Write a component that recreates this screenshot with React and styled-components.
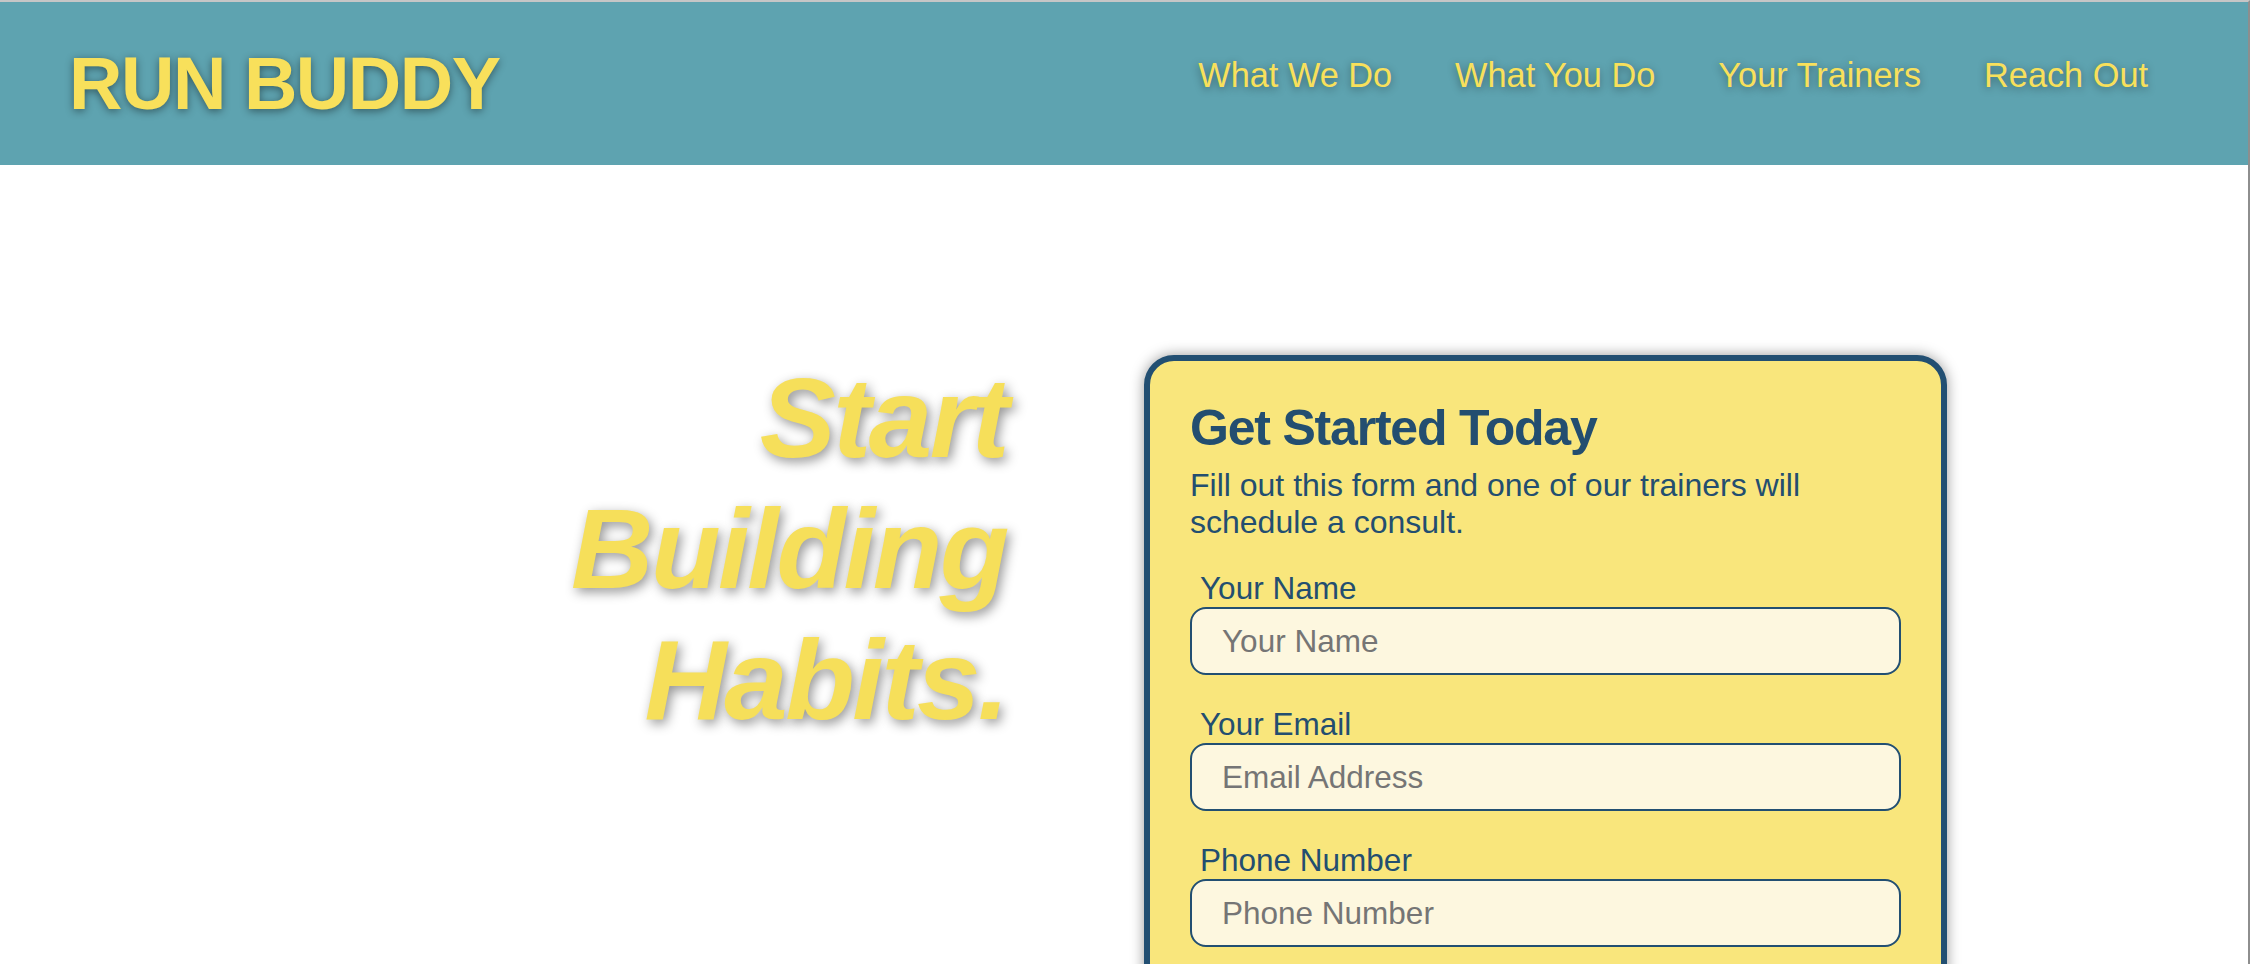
import React from "react";
import styled, { createGlobalStyle } from "styled-components";

const GlobalStyle = createGlobalStyle`
  html, body {
    margin: 0;
    padding: 0;
    background: #ffffff;
  }
  body {
    font-family: "Liberation Sans", Arial, Helvetica, sans-serif;
  }
  *, *::before, *::after {
    box-sizing: border-box;
  }
`;

const Page = styled.div`
  height: 964px;
  overflow: hidden;
  border-top: 2px solid #c6c6c6;
  border-right: 2px solid #8e8e8e;
  background: #ffffff;
`;

const Header = styled.header`
  display: flex;
  align-items: center;
  justify-content: space-between;
  height: 163px;
  padding: 0 100px 0 69px;
  background: #5ea3b0;
`;

const Logo = styled.h1`
  margin: 0;
  font-size: 74px;
  font-weight: 700;
  line-height: 1;
  letter-spacing: -1.5px;
  color: #f8e05b;
  text-shadow: 0 2px 9px rgba(0, 0, 0, 0.45);
`;

const Nav = styled.nav`
  display: flex;
  gap: 63px;
  margin-bottom: 16px;
`;

const NavLink = styled.a`
  font-size: 34.3px;
  line-height: 1;
  color: #f8e05b;
  text-decoration: none;
  text-shadow: 0 2px 9px rgba(0, 0, 0, 0.4);
`;

const Main = styled.main`
  display: flex;
  align-items: flex-start;
  padding-top: 187px;
`;

const Hero = styled.h2`
  flex: 0 0 1007px;
  margin: 0;
  text-align: right;
  font-size: 114px;
  font-style: italic;
  font-weight: 700;
  line-height: 131px;
  letter-spacing: -2.5px;
  color: #f6df5a;
  text-shadow: 3px 4px 12px rgba(0, 0, 0, 0.42);
`;

const Card = styled.section`
  flex: 0 0 803px;
  margin: 3px 0 0 137px;
  padding: 40px 40px 60px;
  background: #f9e67c;
  border: 6px solid #224f72;
  border-radius: 30px;
  box-shadow: 0 0 14px rgba(0, 0, 0, 0.4);
  color: #234e70;
`;

const CardTitle = styled.h2`
  margin: 0 0 11px;
  font-size: 50px;
  font-weight: 700;
  line-height: 55px;
  letter-spacing: -1.2px;
`;

const Intro = styled.p`
  margin: 0;
  font-size: 32px;
  line-height: 37px;
`;

const Form = styled.form`
  display: flex;
  flex-direction: column;
  gap: 31px;
  margin-top: 29px;
`;

const Field = styled.div`
  display: flex;
  flex-direction: column;
`;

const Label = styled.label`
  padding-left: 10px;
  font-size: 31.5px;
  line-height: 37px;
`;

const Input = styled.input`
  width: 100%;
  height: 68px;
  padding: 0 30px;
  border: 2px solid #224f72;
  border-radius: 16px;
  background: #fdf7df;
  font-family: inherit;
  font-size: 31.5px;
  color: #234e70;
  outline: none;
  &::placeholder {
    color: #757575;
  }
`;

const fields = [
  { id: "name", label: "Your Name", placeholder: "Your Name", type: "text" },
  { id: "email", label: "Your Email", placeholder: "Email Address", type: "email" },
  { id: "phone", label: "Phone Number", placeholder: "Phone Number", type: "tel" },
];

const links = ["What We Do", "What You Do", "Your Trainers", "Reach Out"];

export default function App() {
  return (
    <>
      <GlobalStyle />
      <Page>
        <Header>
          <Logo>RUN BUDDY</Logo>
          <Nav>
            {links.map((l) => (
              <NavLink key={l} href="#">
                {l}
              </NavLink>
            ))}
          </Nav>
        </Header>
        <Main>
          <Hero>
            Start
            <br />
            Building
            <br />
            Habits.
          </Hero>
          <Card>
            <CardTitle>Get Started Today</CardTitle>
            <Intro>Fill out this form and one of our trainers will schedule a consult.</Intro>
            <Form onSubmit={(e) => e.preventDefault()}>
              {fields.map((f) => (
                <Field key={f.id}>
                  <Label htmlFor={f.id}>{f.label}</Label>
                  <Input id={f.id} type={f.type} placeholder={f.placeholder} />
                </Field>
              ))}
            </Form>
          </Card>
        </Main>
      </Page>
    </>
  );
}
